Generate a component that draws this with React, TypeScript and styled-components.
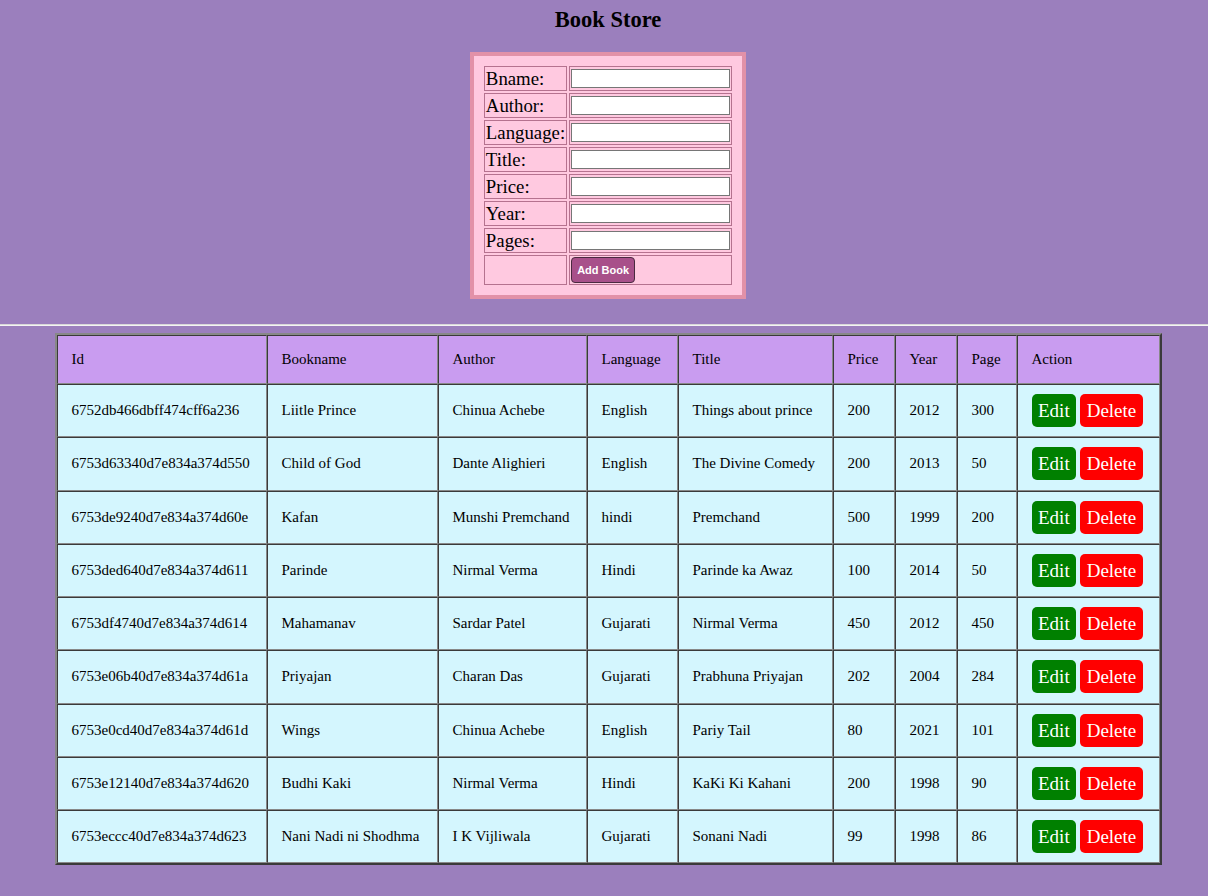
import React from "react";
import styled, { createGlobalStyle } from "styled-components";

const Global = createGlobalStyle`
  html, body { margin: 0; padding: 0; }
  body {
    background: #9b7fbd;
    font-family: "Liberation Serif", "Times New Roman", serif;
    color: #000;
  }
`;

const Page = styled.div`
  min-height: 896px;
`;

const Top = styled.div`
  padding-left: 8px;
  display: flex;
  flex-direction: column;
  align-items: center;
`;

const Heading = styled.h2`
  margin: 6px 0 18px;
  font-size: 22.5px;
  line-height: 28px;
  font-weight: bold;
`;

const FormBox = styled.div`
  background: #ffc9e0;
  border: 4px solid #e291a8;
  padding: 8px;
  margin-bottom: 25px;
`;

const FormTable = styled.table`
  border-collapse: separate;
  border-spacing: 2px;
`;

const FormCell = styled.td`
  border: 1px solid #b5728f;
  padding: 1px;
  font-size: 19px;
  line-height: 21px;
  height: 21px;
  vertical-align: middle;
`;

const LabelCell = styled(FormCell)`
  white-space: nowrap;
  font-size: 18.8px;
`;

const Input = styled.input`
  display: block;
  box-sizing: border-box;
  width: 159px;
  height: 19px;
  border: 1.5px solid #767676;
  background: #fff;
  padding: 1px 2px;
  font-size: 13px;
`;

const AddButton = styled.button`
  display: block;
  box-sizing: border-box;
  width: 64px;
  height: 26px;
  background: #a8508a;
  color: #fff;
  border: 1px solid #4a2a40;
  border-radius: 4px;
  font-family: "Liberation Sans", Arial, sans-serif;
  font-size: 11px;
  font-weight: bold;
  padding: 0;
`;

const Rule = styled.hr`
  margin: 0 0 7px;
  border: none;
  border-top: 1px solid #d8d8d8;
  border-bottom: 1px solid #f4f4f4;
  height: 0;
`;

const TableWrap = styled.div`
  padding-left: 8px;
  display: flex;
  justify-content: center;
`;

const Table = styled.table`
  width: 1107px;
  table-layout: fixed;
  border-collapse: separate;
  border-spacing: 0;
  border-style: solid;
  border-width: 2px;
  border-color: #888 #3a3a3a #3a3a3a #888;
  font-size: 15px;
`;

const Cell = styled.td<{ $w?: number }>`
  box-sizing: border-box;
  border-style: solid;
  border-width: 1px;
  border-color: #3a3a3a #888 #888 #3a3a3a;
  padding: 0 14px;
  height: 53.25px;
  vertical-align: middle;
  text-align: left;
  font-weight: normal;
  background: #d4f6fe;
  white-space: nowrap;
  ${(p) => (p.$w ? `width: ${p.$w}px;` : "")}
`;

const HeadCell = styled(Cell).attrs({ as: "th" })`
  background: #c99cf0;
  height: 49px;
`;

const ActionButton = styled.button<{ $kind: "edit" | "delete" }>`
  border: none;
  border-radius: 5px;
  color: #fff;
  background: ${(p) => (p.$kind === "edit" ? "#008000" : "#ff0000")};
  font-family: "Liberation Serif", "Times New Roman", serif;
  font-size: 19px;
  line-height: 21px;
  padding: 6px 6.5px;
  margin-right: 4px;
  vertical-align: middle;
`;

const fields = ["Bname:", "Author:", "Language:", "Title:", "Price:", "Year:", "Pages:"];

const headers: [string, number][] = [
  ["Id", 210],
  ["Bookname", 171],
  ["Author", 149],
  ["Language", 91],
  ["Title", 155],
  ["Price", 62],
  ["Year", 62],
  ["Page", 60],
  ["Action", 143],
];

const books = [
  ["6752db466dbff474cff6a236", "Liitle Prince", "Chinua Achebe", "English", "Things about prince", "200", "2012", "300"],
  ["6753d63340d7e834a374d550", "Child of God", "Dante Alighieri", "English", "The Divine Comedy", "200", "2013", "50"],
  ["6753de9240d7e834a374d60e", "Kafan", "Munshi Premchand", "hindi", "Premchand", "500", "1999", "200"],
  ["6753ded640d7e834a374d611", "Parinde", "Nirmal Verma", "Hindi", "Parinde ka Awaz", "100", "2014", "50"],
  ["6753df4740d7e834a374d614", "Mahamanav", "Sardar Patel", "Gujarati", "Nirmal Verma", "450", "2012", "450"],
  ["6753e06b40d7e834a374d61a", "Priyajan", "Charan Das", "Gujarati", "Prabhuna Priyajan", "202", "2004", "284"],
  ["6753e0cd40d7e834a374d61d", "Wings", "Chinua Achebe", "English", "Pariy Tail", "80", "2021", "101"],
  ["6753e12140d7e834a374d620", "Budhi Kaki", "Nirmal Verma", "Hindi", "KaKi Ki Kahani", "200", "1998", "90"],
  ["6753eccc40d7e834a374d623", "Nani Nadi ni Shodhma", "I K Vijliwala", "Gujarati", "Sonani Nadi", "99", "1998", "86"],
];

export default function App() {
  return (
    <Page>
      <Global />
      <Top>
        <Heading>Book Store</Heading>
        <FormBox>
          <FormTable>
            <tbody>
              {fields.map((f) => (
                <tr key={f}>
                  <LabelCell>{f}</LabelCell>
                  <FormCell>
                    <Input type="text" />
                  </FormCell>
                </tr>
              ))}
              <tr>
                <LabelCell />
                <FormCell>
                  <AddButton>Add Book</AddButton>
                </FormCell>
              </tr>
            </tbody>
          </FormTable>
        </FormBox>
      </Top>
      <Rule />
      <TableWrap>
        <Table>
          <thead>
            <tr>
              {headers.map(([h, w]) => (
                <HeadCell key={h} $w={w}>
                  {h}
                </HeadCell>
              ))}
            </tr>
          </thead>
          <tbody>
            {books.map((b) => (
              <tr key={b[0]}>
                {b.map((v, i) => (
                  <Cell key={i}>{v}</Cell>
                ))}
                <Cell>
                  <ActionButton $kind="edit">Edit</ActionButton>
                  <ActionButton $kind="delete">Delete</ActionButton>
                </Cell>
              </tr>
            ))}
          </tbody>
        </Table>
      </TableWrap>
    </Page>
  );
}
